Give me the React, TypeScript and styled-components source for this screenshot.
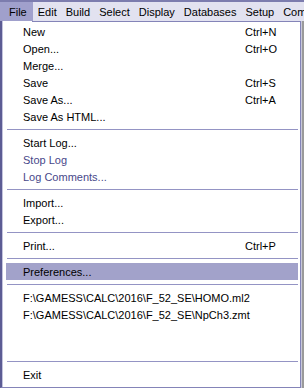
import React from 'react'
import styled, {createGlobalStyle} from "styled-components";

const Global = createGlobalStyle`
  html, body {
    margin: 0;
    padding: 0;
    background: #9a9a9a;
  }
  * {
    box-sizing: border-box;
  }
`

type Entry =
    | { kind: 'item', label: string, shortcut?: string, disabled?: boolean, active?: boolean }
    | { kind: 'sep' }
    | { kind: 'blank' }

const bar = ['File', 'Edit', 'Build', 'Select', 'Display', 'Databases', 'Setup', 'Compute']

const entries: Entry[] = [
    {kind: 'item', label: 'New', shortcut: 'Ctrl+N'},
    {kind: 'item', label: 'Open...', shortcut: 'Ctrl+O'},
    {kind: 'item', label: 'Merge...'},
    {kind: 'item', label: 'Save', shortcut: 'Ctrl+S'},
    {kind: 'item', label: 'Save As...', shortcut: 'Ctrl+A'},
    {kind: 'item', label: 'Save As HTML...'},
    {kind: 'sep'},
    {kind: 'item', label: 'Start Log...'},
    {kind: 'item', label: 'Stop Log', disabled: true},
    {kind: 'item', label: 'Log Comments...', disabled: true},
    {kind: 'sep'},
    {kind: 'item', label: 'Import...'},
    {kind: 'item', label: 'Export...'},
    {kind: 'sep'},
    {kind: 'item', label: 'Print...', shortcut: 'Ctrl+P'},
    {kind: 'sep'},
    {kind: 'item', label: 'Preferences...', active: true},
    {kind: 'sep'},
    {kind: 'item', label: 'F:\\GAMESS\\CALC\\2016\\F_52_SE\\HOMO.ml2'},
    {kind: 'item', label: 'F:\\GAMESS\\CALC\\2016\\F_52_SE\\NpCh3.zmt'},
    {kind: 'blank'},
    {kind: 'blank'},
    {kind: 'sep'},
    {kind: 'item', label: 'Exit'},
]

const S = {
    Screen: styled.div`
      width: 304px;
      height: 388px;
      display: flex;
      flex-direction: column;
      overflow: hidden;
      font-family: "Liberation Sans", Arial, sans-serif;
      font-size: 11px;
      color: #000;
    `,
    MenuBar: styled.div`
      height: 21px;
      flex: none;
      display: flex;
      background: #e2e2f0;
      border-top: 2px solid #7c7cae;
      white-space: nowrap;
    `,
    BarItem: styled.div<{open?: boolean}>`
      flex: none;
      display: flex;
      align-items: center;
      padding: 0 4px 0 5px;
      background: ${props => props.open ? '#a0a0cc' : 'transparent'};
      &:first-child {
        padding: 0 6px 0 9px;
      }
    `,
    Body: styled.div`
      flex: 1;
      display: flex;
      min-height: 0;
    `,
    Dropdown: styled.div`
      width: 301px;
      flex: none;
      display: flex;
      flex-direction: column;
      padding: 2px 2px 0 4px;
      border-left: 2px solid #5c5c94;
      border-right: 1px solid #8484b8;
      border-bottom: 1px solid #8484b8;
      box-shadow: inset 1px 0 0 #c4c4de;
      background: linear-gradient(#8484b8, #8484b8) 30px 0 / calc(100% - 30px) 1px no-repeat, #fff;
    `,
    Backdrop: styled.div`
      flex: 1;
      background: #9a9a9a;
      border-left: 1px solid #c8c8d8;
    `,
    Item: styled.div<{active?: boolean, disabled?: boolean}>`
      height: 17px;
      flex: none;
      display: flex;
      align-items: center;
      padding-left: 17px;
      white-space: nowrap;
      background: ${props => props.active ? '#a2a2ca' : 'transparent'};
      color: ${props => props.disabled ? '#48488a' : '#000'};
    `,
    Label: styled.span`
      width: 222px;
      flex: none;
    `,
    Shortcut: styled.span`
      flex: none;
    `,
    Blank: styled.div`
      height: 17px;
      flex: none;
    `,
    Separator: styled.div`
      height: 1px;
      flex: none;
      margin: 4px 0 4px 1px;
      background: #9494c4;
    `,
}

function App() {
    return (
        <>
            <Global/>
            <S.Screen>
                <S.MenuBar>
                    {bar.map((name, i) => (
                        <S.BarItem key={name} open={i === 0}>{name}</S.BarItem>
                    ))}
                </S.MenuBar>
                <S.Body>
                    <S.Dropdown>
                        {entries.map((entry, i) => {
                            if (entry.kind === 'sep') return <S.Separator key={i}/>
                            if (entry.kind === 'blank') return <S.Blank key={i}/>
                            return (
                                <S.Item key={i} active={entry.active} disabled={entry.disabled}>
                                    <S.Label>{entry.label}</S.Label>
                                    {entry.shortcut && <S.Shortcut>{entry.shortcut}</S.Shortcut>}
                                </S.Item>
                            )
                        })}
                    </S.Dropdown>
                    <S.Backdrop/>
                </S.Body>
            </S.Screen>
        </>
    )
}

export default App;
